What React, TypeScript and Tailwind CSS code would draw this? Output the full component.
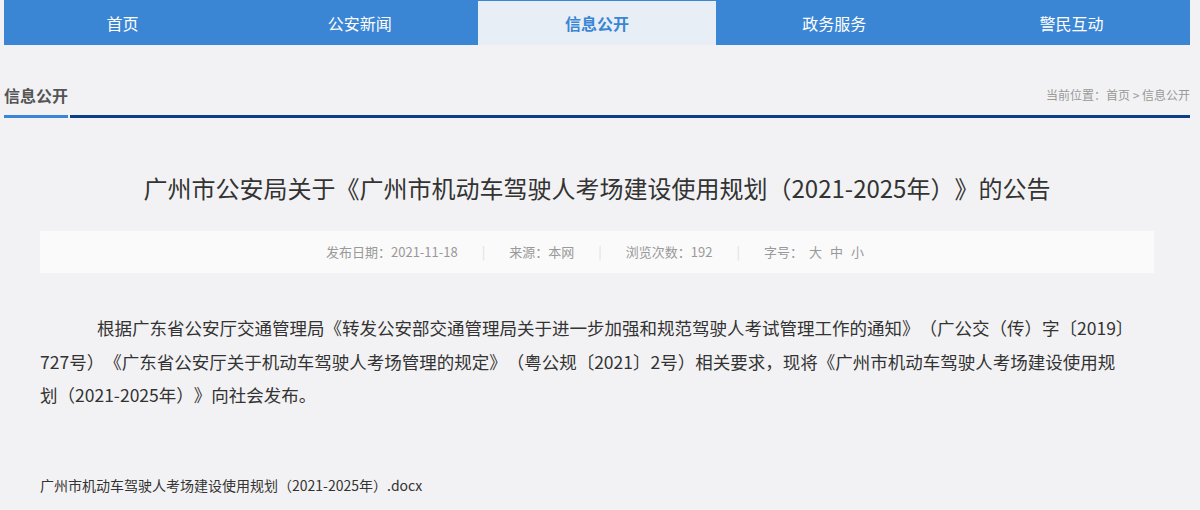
import React from 'react';

const navItems = ['首页', '公安新闻', '信息公开', '政务服务', '警民互动'];

const meta = ['发布日期：2021-11-18', '来源：本网', '浏览次数：192'];

export default function App() {
    return (
        <div
            className="min-h-[510px] w-[1200px] bg-[#f2f2f4] text-[#333] [text-spacing-trim:space-all]"
            style={{ fontFamily: '"Noto Sans CJK SC", "Noto Sans", sans-serif' }}
        >
            <div className="ml-[4px] w-[1186px]">
                {/* Nav */}
                <nav className="grid h-[45px] grid-cols-5 bg-[#3a86d4]">
                    {navItems.map((item) => (
                        <a
                            key={item}
                            className={
                                item === '信息公开'
                                    ? 'mt-[1px] flex items-center justify-center bg-[#e8eef6] text-[16px] font-bold text-[#3a86d4]'
                                    : 'flex items-center justify-center text-[16px] text-white'
                            }
                        >
                            {item}
                        </a>
                    ))}
                </nav>

                {/* Section header */}
                <div className="mt-[38px] flex items-center justify-between leading-[24px]">
                    <h3 className="text-[16px] font-bold text-[#555]">信息公开</h3>
                    <div className="text-[12px] text-[#999]">当前位置：首页 &gt; 信息公开</div>
                </div>
                <div className="mt-[8px] flex gap-[2px]">
                    <div className="h-[3px] w-[64px] bg-[#3a86d4]" />
                    <div className="h-[3px] flex-1 bg-[#0d3f88]" />
                </div>

                {/* Article */}
                <div className="px-[36px]">
                    <h1 className="mt-[54px] text-center text-[24px] leading-[32px] text-[#333]">
                        广州市公安局关于《广州市机动车驾驶人考场建设使用规划（2021-2025年）》的公告
                    </h1>

                    <div className="mt-[27px] flex h-[42px] items-center justify-center bg-[#fafafa] pr-[4px] text-[13px] text-[#999]">
                        {meta.map((m) => (
                            <React.Fragment key={m}>
                                <span>{m}</span>
                                <span className="mx-[24px] text-[#e0e0e0]">|</span>
                            </React.Fragment>
                        ))}
                        <span>字号：</span>
                        <span className="ml-[6px] flex gap-[8px]">
                            <a>大</a>
                            <a>中</a>
                            <a>小</a>
                        </span>
                    </div>

                    <p className="mt-[38px] indent-[57px] text-[17.5px] leading-[33.5px] text-[#333]">
                        根据广东省公安厅交通管理局《转发公安部交通管理局关于进一步加强和规范驾驶人考试管理工作的通知》（广公交（传）字〔2019〕727号）《广东省公安厅关于机动车驾驶人考场管理的规定》（粤公规〔2021〕2号）相关要求，现将《广州市机动车驾驶人考场建设使用规
                        <br />
                        划（2021-2025年）》向社会发布。
                    </p>

                    <div className="mt-[63px] text-[14px] leading-[20px] text-[#333]">
                        广州市机动车驾驶人考场建设使用规划（2021-2025年）.docx
                    </div>
                </div>
            </div>
        </div>
    );
}
